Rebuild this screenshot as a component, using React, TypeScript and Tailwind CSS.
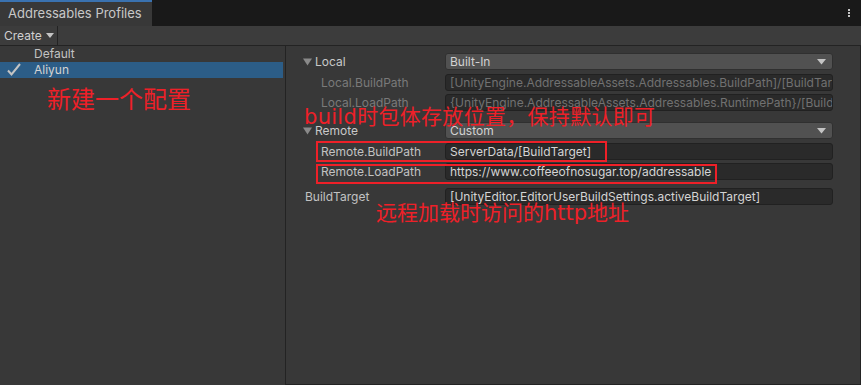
const fieldBase =
  "h-[17px] min-w-0 flex-1 rounded-[3px] border border-[#212121] bg-[#2a2a2a] px-[4px] leading-[15px] whitespace-nowrap overflow-hidden";

function Dropdown({ value }: { value: string }) {
  return (
    <div className="flex h-[17px] min-w-0 flex-1 items-center justify-between rounded-[3px] border border-[#303030] bg-[#515151] pl-[4px] pr-[6px] text-[#d2d2d2]">
      <span>{value}</span>
      <svg width="9" height="6" viewBox="0 0 9 6">
        <path d="M0 0 H9 L4.5 5.5 Z" fill="#c4c4c4" />
      </svg>
    </div>
  );
}

function Triangle() {
  return (
    <svg width="9" height="8" viewBox="0 0 9 8" className="mr-[3px]">
      <path d="M0 0.5 H9 L4.5 7.5 Z" fill="#8a8a8a" />
    </svg>
  );
}

function Row({
  label,
  value,
  dim,
  indent,
  className,
}: {
  label: string;
  value: string;
  dim?: boolean;
  indent?: boolean;
  className?: string;
}) {
  return (
    <div className={"flex h-[17px] items-center " + (className ?? "")}>
      <div
        className={
          "w-[142px] shrink-0 " +
          (indent ? "pl-[18px] " : "pl-[2px] ") +
          (dim ? "text-[#7a7a7a]" : "text-[#c2c2c2]")
        }
      >
        {label}
      </div>
      <div className={fieldBase + (dim ? " text-[#717171]" : " text-[#d4d4d4]")}>
        {value}
      </div>
    </div>
  );
}

export default function App() {
  return (
    <div
      className="relative h-[385px] w-[861px] overflow-hidden bg-[#383838] text-[12px] text-[#c4c4c4]"
      style={{ fontFamily: "Inter, 'Liberation Sans', sans-serif" }}
    >
      {/* tab bar */}
      <div className="flex h-[26px] items-stretch justify-between bg-[#191919]">
        <div className="flex w-[152px] items-center border-t-2 border-[#3a72b0] bg-[#383838] pl-[8px] text-[13px] text-[#c8c8c8]">
          Addressables Profiles
        </div>
        <div className="flex flex-col items-center justify-center gap-[1px] pr-[11px]">
          <span className="block h-[2px] w-[2px] bg-[#c4c4c4]" />
          <span className="block h-[2px] w-[2px] bg-[#c4c4c4]" />
          <span className="block h-[2px] w-[2px] bg-[#c4c4c4]" />
        </div>
      </div>

      {/* toolbar */}
      <div className="flex h-[20px] items-stretch border-b border-[#232323] bg-[#3c3c3c]">
        <div className="flex w-[58px] items-center gap-[4px] border-r border-[#232323] pl-[4px] text-[#d0d0d0]">
          Create
          <svg width="8" height="5" viewBox="0 0 8 5">
            <path d="M0 0 H8 L4 5 Z" fill="#c4c4c4" />
          </svg>
        </div>
      </div>

      {/* body */}
      <div className="flex h-[339px]">
        <div className="w-[286px] shrink-0 border-r border-[#232323] pr-[2px]">
          <div className="flex h-[16px] items-center pl-[34px] text-[#c2c2c2]">Default</div>
          <div className="flex h-[16px] items-center bg-[#2c5d87] text-[#d4d4d4]">
            <svg width="34" height="14" viewBox="0 0 34 14">
              <path d="M8 7.5 L11.5 11.5 L20 1" stroke="#c4c4c4" strokeWidth="2" fill="none" />
            </svg>
            Aliyun
          </div>
        </div>

        <div className="min-w-0 flex-1 border-r border-b border-[#232323] pl-[17px] pr-[27px] pt-[7px]">
          <div className="flex h-[17px] items-center">
            <div className="flex w-[142px] shrink-0 items-center text-[#c8c8c8]">
              <Triangle />
              Local
            </div>
            <Dropdown value="Built-In" />
          </div>
          <Row
            className="mt-[4px]"
            indent
            dim
            label="Local.BuildPath"
            value="[UnityEngine.AddressableAssets.Addressables.BuildPath]/[BuildTarget]"
          />
          <Row
            className="mt-[3px]"
            indent
            dim
            label="Local.LoadPath"
            value="{UnityEngine.AddressableAssets.Addressables.RuntimePath}/[BuildTarget]"
          />
          <div className="mt-[11px] flex h-[17px] items-center">
            <div className="flex w-[142px] shrink-0 items-center text-[#c8c8c8]">
              <Triangle />
              Remote
            </div>
            <Dropdown value="Custom" />
          </div>
          <Row className="mt-[4px]" indent label="Remote.BuildPath" value="ServerData/[BuildTarget]" />
          <Row
            className="mt-[3px]"
            indent
            label="Remote.LoadPath"
            value="https://www.coffeeofnosugar.top/addressable"
          />
          <Row
            className="mt-[8px]"
            label="BuildTarget"
            value="[UnityEditor.EditorUserBuildSettings.activeBuildTarget]"
          />
        </div>
      </div>

      {/* annotations */}
      <div
        className="pointer-events-none absolute inset-0 text-[#ee2028]"
        style={{ fontFamily: "'DejaVu Sans', 'Noto Sans CJK SC', sans-serif" }}
      >
        <div className="absolute left-[316px] top-[141px] h-[21px] w-[291px] border-2 border-[#ee2028]" />
        <div className="absolute left-[316px] top-[164px] h-[20px] w-[401px] border-2 border-[#ee2028]" />
        <div className="absolute left-[47px] top-[84px] text-[24px] leading-[32px]">新建一个配置</div>
        <div className="absolute left-[304px] top-[103px] text-[21px] leading-[28px] tracking-[0.3px]">
          build时包体存放位置，保持默认即可
        </div>
        <div className="absolute left-[376px] top-[199px] text-[21px] leading-[28px]">
          远程加载时访问的http地址
        </div>
      </div>
    </div>
  );
}
